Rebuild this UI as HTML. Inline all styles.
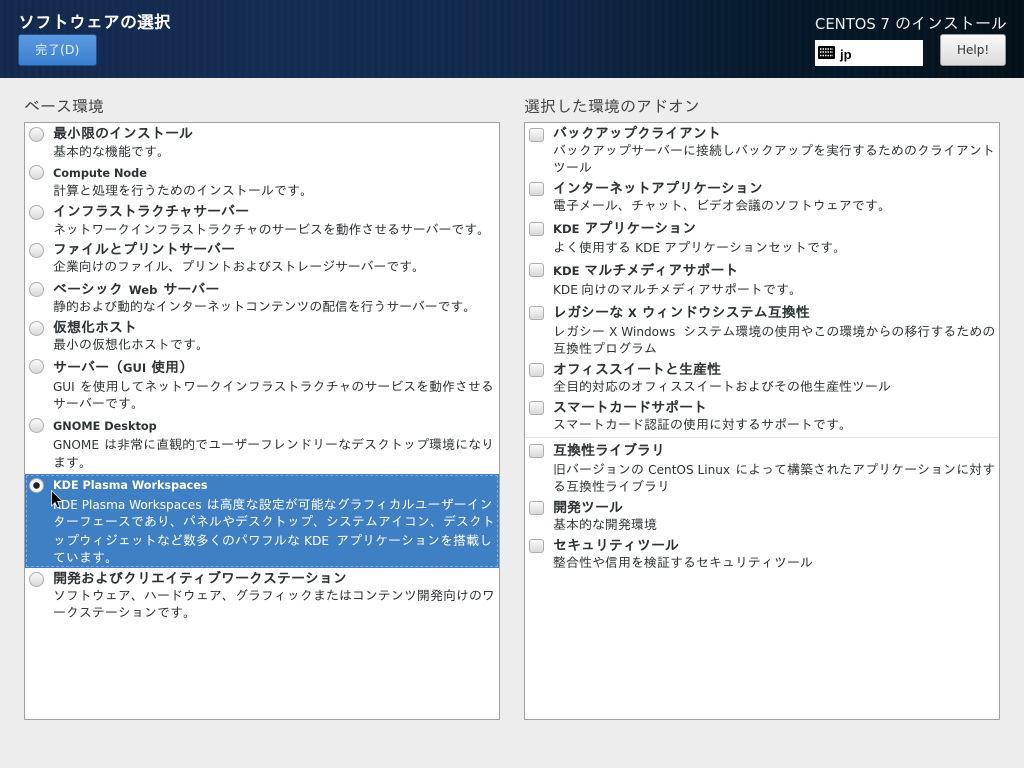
<!DOCTYPE html>
<html lang="ja"><head><meta charset="utf-8"><style>
html,body{margin:0;padding:0;width:1024px;height:768px;overflow:hidden;background:#ededed}
body{position:relative;font-family:"DejaVu Sans","IPAGothic","Noto Sans CJK JP",sans-serif;font-size:13px;color:#2e3436}
.t{position:absolute;white-space:nowrap;line-height:18px;height:18px}
.b{font-weight:bold;font-size:14px}
.b u{text-decoration:none;font-size:11.6px}
.d{font-size:13px}
.d u{text-decoration:none;font-size:12.1px;margin-right:1px}
.h{position:absolute;left:0;top:0;width:1024px;height:78px;background:repeating-linear-gradient(90deg,rgba(255,255,255,.01) 0 3px,rgba(0,0,0,.015) 3px 7px),linear-gradient(90deg,#13294d 0,#142c55 30%,#0f2747 55%,#06192c 75%,#031018 100%)}
.box{position:absolute;top:122px;width:474px;height:596px;background:#fff;border:1px solid #a1a1a1}
.r{position:absolute;left:29px;width:13px;height:13px;border:1px solid #adadad;border-radius:50%;background:linear-gradient(#fbfbfb,#d8d8d8)}
.c{position:absolute;left:529px;width:13px;height:12px;border:1px solid #adadad;border-radius:3px;background:linear-gradient(#fbfbfb,#d8d8d8)}
</style></head><body>
<div class="h"></div>
<div class="t" style="left:18px;top:14px;font-size:17px;color:#fff;font-weight:bold">ソフトウェアの選択</div>
<div style="position:absolute;left:18px;top:34px;width:77px;height:30px;border:1px solid #24508c;border-radius:3px;background:linear-gradient(#5a9ae0,#3a80d0)"></div>
<div class="t" style="left:35px;top:41px;font-size:12.500px;color:#eef">完了(D)</div>
<div class="t" style="left:815px;top:15px;font-size:16px;color:#eee"><span style="font-size:14.800px">CENTOS 7</span> のインストール</div>
<div style="position:absolute;left:815px;top:40px;width:108px;height:26px;background:#fff"></div>
<svg style="position:absolute;left:818px;top:46px" width="17" height="13" viewBox="0 0 17 13"><rect width="17" height="13" rx="1" fill="#000"/><path d="M2 3h13M2 6h13M2 9.500h13" stroke="#fff" stroke-width="1.400" stroke-dasharray="1.500 1"/></svg>
<div class="t" style="left:840px;top:46px;font-family:'Liberation Sans',sans-serif;font-size:13px;font-weight:bold;color:#000">jp</div>
<div style="position:absolute;left:940px;top:34px;width:64px;height:30px;border:1px solid #999;border-radius:3px;background:linear-gradient(#fafafa,#dcdcdc)"></div>
<div class="t" style="left:957px;top:41px;font-size:12px;color:#333">Help!</div>

<div class="t" style="left:24px;top:98px;font-size:16px;color:#444">ベース環境</div>
<div class="t" style="left:524px;top:98px;font-size:16px;color:#444">選択した環境のアドオン</div>
<div class="box" style="left:24px"></div>
<div class="box" style="left:524px"></div>
<div style="position:absolute;left:25px;top:474px;width:474px;height:94px;background:#3f7fc4;outline:1px dashed #7fa9d8;outline-offset:-2px"></div>
<div style="position:absolute;left:525px;top:437px;width:474px;height:1px;background:#e5e5e5"></div>

<i class="r" style="top:127px"></i><i class="r" style="top:165px"></i><i class="r" style="top:205px"></i><i class="r" style="top:243px"></i><i class="r" style="top:282px"></i><i class="r" style="top:321px"></i><i class="r" style="top:359px"></i><i class="r" style="top:418px"></i><i class="r" style="top:478px;background:radial-gradient(circle,#222 0 3px,#f5f5f5 3.500px)"></i><i class="r" style="top:572px"></i>

<div class="t b" style="left:53px;top:125px">最小限のインストール</div>
<div class="t d" style="left:53px;top:144px">基本的な機能です。</div>
<div class="t b" style="left:53px;top:165px;font-size:11.300px">Compute Node</div>
<div class="t d" style="left:53px;top:183px">計算と処理を行うためのインストールです。</div>
<div class="t b" style="left:53px;top:203px">インフラストラクチャサーバー</div>
<div class="t d" style="left:53px;top:222px;letter-spacing:-.15px">ネットワークインフラストラクチャのサービスを動作させるサーバーです。</div>
<div class="t b" style="left:53px;top:241px">ファイルとプリントサーバー</div>
<div class="t d" style="left:53px;top:259px;letter-spacing:-.18px">企業向けのファイル、プリントおよびストレージサーバーです。</div>
<div class="t b" style="left:53px;top:281px">ベーシック <u style="margin:0 1px">Web</u> サーバー</div>
<div class="t d" style="left:53px;top:299px;letter-spacing:-.18px">静的および動的なインターネットコンテンツの配信を行うサーバーです。</div>
<div class="t b" style="left:53px;top:319px">仮想化ホスト</div>
<div class="t d" style="left:53px;top:337px">最小の仮想化ホストです。</div>
<div class="t b" style="left:53px;top:359px">サーバー（<u>GUI</u> 使用）</div>
<div class="t d" style="left:53px;top:378px;letter-spacing:-.06px"><u>GUI</u> を使用してネットワークインフラストラクチャのサービスを動作させる</div>
<div class="t d" style="left:53px;top:396px">サーバーです。</div>
<div class="t b" style="left:53px;top:418px;font-size:11.300px">GNOME Desktop</div>
<div class="t d" style="left:53px;top:436px"><u>GNOME</u> は非常に直観的でユーザーフレンドリーなデスクトップ環境になり</div>
<div class="t d" style="left:53px;top:455px">ます。</div>
<div class="t b" style="left:53px;top:477px;font-size:11.200px;color:#fff">KDE Plasma Workspaces</div>
<div class="t d" style="left:53px;top:496px;color:#fff"><u>KDE Plasma Workspaces</u> は高度な設定が可能なグラフィカルユーザーイン</div>
<div class="t d" style="left:53px;top:514px;color:#fff">ターフェースであり、パネルやデスクトップ、システムアイコン、デスクト</div>
<div class="t d" style="left:53px;top:532px;color:#fff">ップウィジェットなど数多くのパワフルな <u style="margin-right:3px">KDE</u> アプリケーションを搭載し</div>
<div class="t d" style="left:53px;top:550px;color:#fff">ています。</div>
<div class="t b" style="left:53px;top:570px">開発およびクリエイティブワークステーション</div>
<div class="t d" style="left:53px;top:588px">ソフトウェア、ハードウェア、グラフィックまたはコンテンツ開発向けのワ</div>
<div class="t d" style="left:53px;top:605px">ークステーションです。</div>
<svg style="position:absolute;left:51px;top:490px" width="13" height="20" viewBox="0 0 13 20"><path d="M.5.500V16L4 12.500 6.500 18 9 17 6.500 11.500H11.500Z" fill="#000" stroke="#fff" stroke-width=".7"/></svg>

<i class="c" style="top:128px"></i><i class="c" style="top:182px"></i><i class="c" style="top:222px"></i><i class="c" style="top:263px"></i><i class="c" style="top:306px"></i><i class="c" style="top:363px"></i><i class="c" style="top:401px"></i><i class="c" style="top:444px"></i><i class="c" style="top:501px"></i><i class="c" style="top:539px"></i>

<div class="t b" style="left:553px;top:125px">バックアップクライアント</div>
<div class="t d" style="left:553px;top:143px">バックアップサーバーに接続しバックアップを実行するためのクライアント</div>
<div class="t d" style="left:553px;top:160px">ツール</div>
<div class="t b" style="left:553px;top:180px">インターネットアプリケーション</div>
<div class="t d" style="left:553px;top:198px">電子メール、チャット、ビデオ会議のソフトウェアです。</div>
<div class="t b" style="left:553px;top:220px"><u>KDE</u> アプリケーション</div>
<div class="t d" style="left:553px;top:239px">よく使用する <u style="margin-right:0">KDE</u> アプリケーションセットです。</div>
<div class="t b" style="left:553px;top:262px"><u>KDE</u> マルチメディアサポート</div>
<div class="t d" style="left:553px;top:281px"><u style="margin-right:-1px">KDE</u> 向けのマルチメディアサポートです。</div>
<div class="t b" style="left:553px;top:304px">レガシーな <u>X</u> ウィンドウシステム互換性</div>
<div class="t d" style="left:553px;top:323px">レガシー <u style="margin-right:4px">X Windows</u> システム環境の使用やこの環境からの移行するための</div>
<div class="t d" style="left:553px;top:341px">互換性プログラム</div>
<div class="t b" style="left:553px;top:361px">オフィススイートと生産性</div>
<div class="t d" style="left:553px;top:379px">全目的対応のオフィススイートおよびその他生産性ツール</div>
<div class="t b" style="left:553px;top:399px">スマートカードサポート</div>
<div class="t d" style="left:553px;top:417px">スマートカード認証の使用に対するサポートです。</div>
<div class="t b" style="left:553px;top:442px">互換性ライブラリ</div>
<div class="t d" style="left:553px;top:461px">旧バージョンの <u>CentOS Linux</u> によって構築されたアプリケーションに対す</div>
<div class="t d" style="left:553px;top:479px">る互換性ライブラリ</div>
<div class="t b" style="left:553px;top:499px">開発ツール</div>
<div class="t d" style="left:553px;top:517px">基本的な開発環境</div>
<div class="t b" style="left:553px;top:537px">セキュリティツール</div>
<div class="t d" style="left:553px;top:555px">整合性や信用を検証するセキュリティツール</div>
</body></html>
